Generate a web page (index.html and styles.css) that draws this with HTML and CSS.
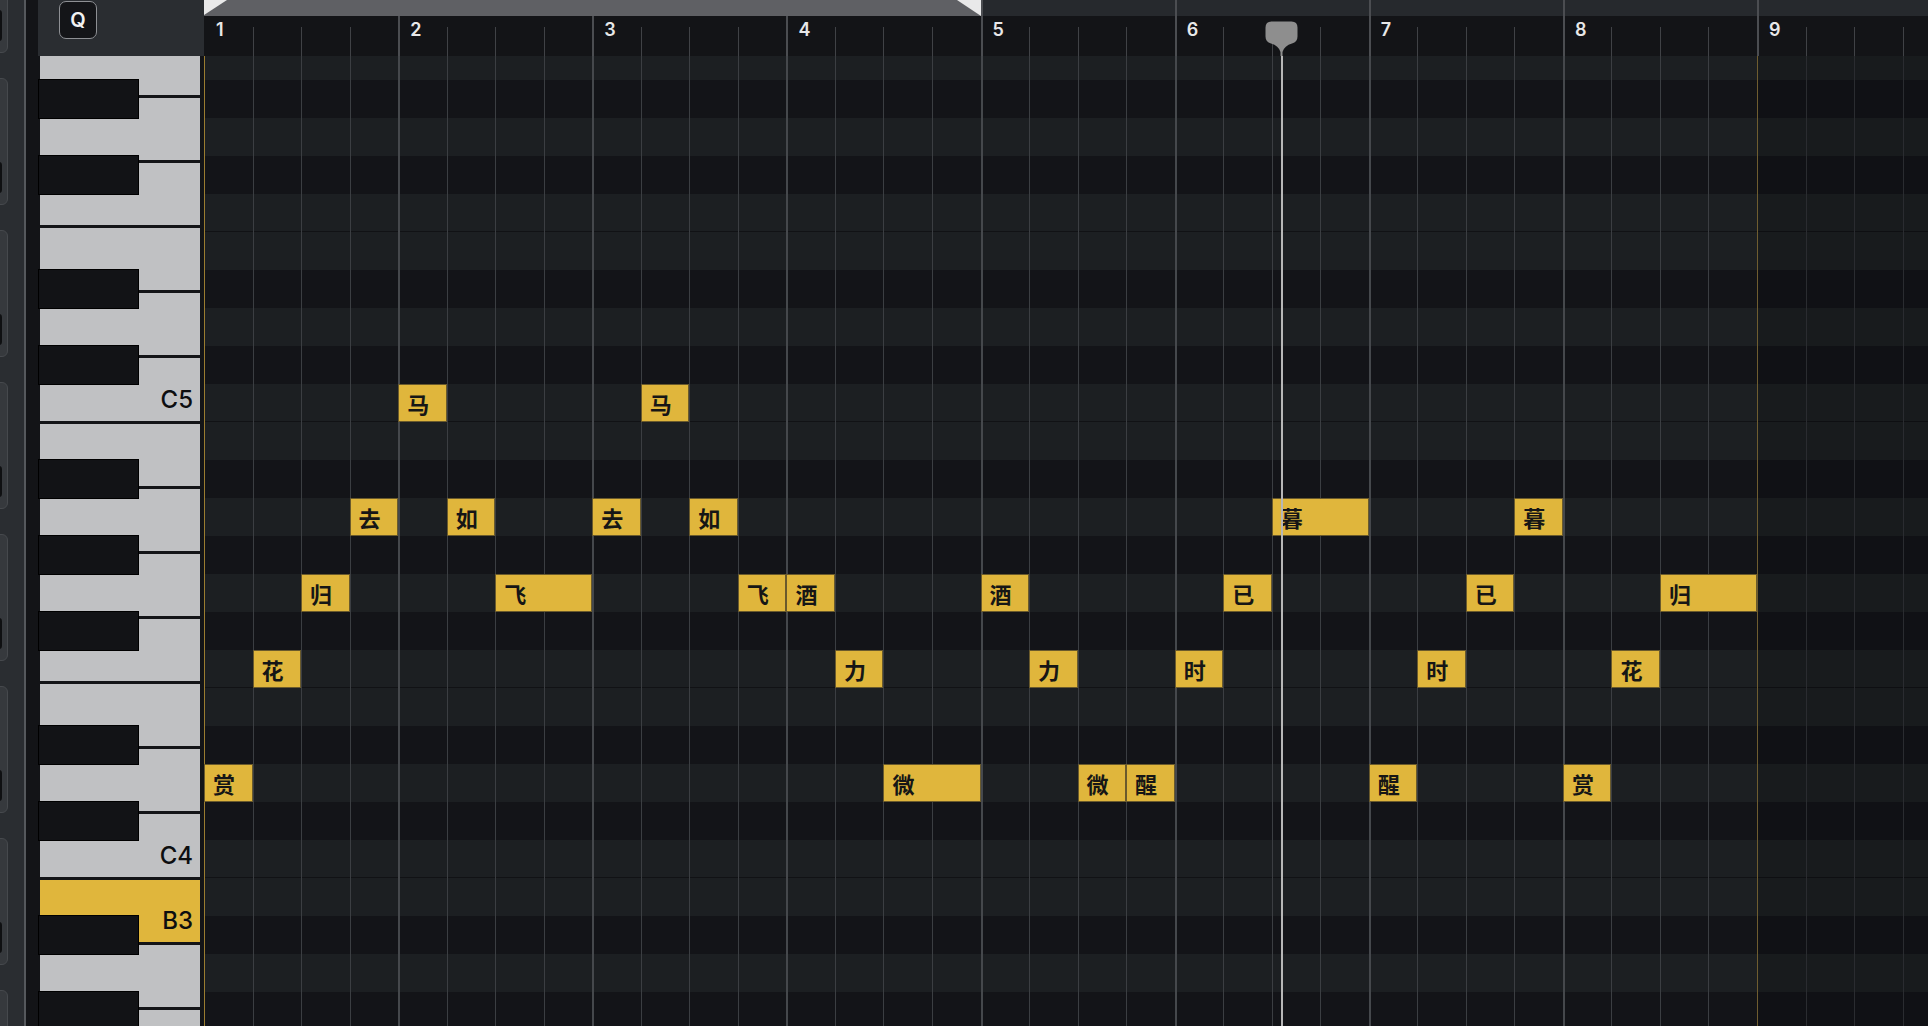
FILE: index.html
```html
<!DOCTYPE html>
<html lang="zh">
<head>
<meta charset="utf-8">
<title>Piano Roll</title>
<link rel="stylesheet" href="styles.css">
</head>
<body>
<div class="app">
  <aside class="sidebar">
    <div class="tab"><span class="tab-knob"></span></div>
    <div class="tab"><span class="tab-knob"></span></div>
    <div class="tab"><span class="tab-knob"></span></div>
    <div class="tab"><span class="tab-knob"></span></div>
    <div class="tab"><span class="tab-knob"></span></div>
    <div class="tab"><span class="tab-knob"></span></div>
    <div class="tab"><span class="tab-knob"></span></div>
    <div class="tab"><span class="tab-knob"></span></div>
  </aside>
  <div class="divider"></div>
  <div class="strip"></div>
  <div class="keys-col">
    <div class="corner"><button class="qbtn">Q</button></div>
    <div class="keyboard">
      <div class="keys">
        <div class="wkey"></div>
        <div class="wkey"></div>
        <div class="wkey"></div>
        <div class="wkey"></div>
        <div class="wkey"></div>
        <div class="wkey">C5</div>
        <div class="wkey"></div>
        <div class="wkey"></div>
        <div class="wkey"></div>
        <div class="wkey"></div>
        <div class="wkey"></div>
        <div class="wkey"></div>
        <div class="wkey">C4</div>
        <div class="wkey active">B3</div>
        <div class="wkey"></div>
        <div class="wkey"></div>
        <div class="bkey" style="--r:1"></div>
        <div class="bkey" style="--r:3"></div>
        <div class="bkey" style="--r:6"></div>
        <div class="bkey" style="--r:8"></div>
        <div class="bkey" style="--r:11"></div>
        <div class="bkey" style="--r:13"></div>
        <div class="bkey" style="--r:15"></div>
        <div class="bkey" style="--r:18"></div>
        <div class="bkey" style="--r:20"></div>
        <div class="bkey" style="--r:23"></div>
        <div class="bkey" style="--r:25"></div>
      </div>
    </div>
  </div>
  <main class="roll">
    <div class="ruler">
      <div class="strip-bg"></div>
      <div class="rbar first" style="grid-column:1 / span 4">1</div>
      <div class="rbar" style="grid-column:5 / span 4">2</div>
      <div class="rbar" style="grid-column:9 / span 4">3</div>
      <div class="rbar" style="grid-column:13 / span 4">4</div>
      <div class="rbar" style="grid-column:17 / span 4">5</div>
      <div class="rbar" style="grid-column:21 / span 4">6</div>
      <div class="rbar" style="grid-column:25 / span 4">7</div>
      <div class="rbar" style="grid-column:29 / span 4">8</div>
      <div class="rbar" style="grid-column:33 / span 4">9</div>
      <div class="tick" style="grid-column:2"></div>
      <div class="tick" style="grid-column:3"></div>
      <div class="tick" style="grid-column:4"></div>
      <div class="tick" style="grid-column:6"></div>
      <div class="tick" style="grid-column:7"></div>
      <div class="tick" style="grid-column:8"></div>
      <div class="tick" style="grid-column:10"></div>
      <div class="tick" style="grid-column:11"></div>
      <div class="tick" style="grid-column:12"></div>
      <div class="tick" style="grid-column:14"></div>
      <div class="tick" style="grid-column:15"></div>
      <div class="tick" style="grid-column:16"></div>
      <div class="tick" style="grid-column:18"></div>
      <div class="tick" style="grid-column:19"></div>
      <div class="tick" style="grid-column:20"></div>
      <div class="tick" style="grid-column:22"></div>
      <div class="tick" style="grid-column:23"></div>
      <div class="tick" style="grid-column:24"></div>
      <div class="tick" style="grid-column:26"></div>
      <div class="tick" style="grid-column:27"></div>
      <div class="tick" style="grid-column:28"></div>
      <div class="tick" style="grid-column:30"></div>
      <div class="tick" style="grid-column:31"></div>
      <div class="tick" style="grid-column:32"></div>
      <div class="tick" style="grid-column:34"></div>
      <div class="tick" style="grid-column:35"></div>
      <div class="tick" style="grid-column:36"></div>
      <div class="locator"></div>
    </div>
    <div class="grid-wrap">
      <div class="grid">
        <div class="row l" style="grid-row:1"></div>
        <div class="row d" style="grid-row:2"></div>
        <div class="row l" style="grid-row:3"></div>
        <div class="row d" style="grid-row:4"></div>
        <div class="row l sep" style="grid-row:5"></div>
        <div class="row l" style="grid-row:6"></div>
        <div class="row d" style="grid-row:7"></div>
        <div class="row l" style="grid-row:8"></div>
        <div class="row d" style="grid-row:9"></div>
        <div class="row l sep" style="grid-row:10"></div>
        <div class="row l" style="grid-row:11"></div>
        <div class="row d" style="grid-row:12"></div>
        <div class="row l" style="grid-row:13"></div>
        <div class="row d" style="grid-row:14"></div>
        <div class="row l" style="grid-row:15"></div>
        <div class="row d" style="grid-row:16"></div>
        <div class="row l sep" style="grid-row:17"></div>
        <div class="row l" style="grid-row:18"></div>
        <div class="row d" style="grid-row:19"></div>
        <div class="row l" style="grid-row:20"></div>
        <div class="row d" style="grid-row:21"></div>
        <div class="row l sep" style="grid-row:22"></div>
        <div class="row l" style="grid-row:23"></div>
        <div class="row d" style="grid-row:24"></div>
        <div class="row l" style="grid-row:25"></div>
        <div class="row d" style="grid-row:26"></div>

        <div class="col bar first" style="grid-column:1"></div>
        <div class="col" style="grid-column:2"></div>
        <div class="col" style="grid-column:3"></div>
        <div class="col" style="grid-column:4"></div>
        <div class="col bar" style="grid-column:5"></div>
        <div class="col" style="grid-column:6"></div>
        <div class="col" style="grid-column:7"></div>
        <div class="col" style="grid-column:8"></div>
        <div class="col bar" style="grid-column:9"></div>
        <div class="col" style="grid-column:10"></div>
        <div class="col" style="grid-column:11"></div>
        <div class="col" style="grid-column:12"></div>
        <div class="col bar" style="grid-column:13"></div>
        <div class="col" style="grid-column:14"></div>
        <div class="col" style="grid-column:15"></div>
        <div class="col" style="grid-column:16"></div>
        <div class="col bar" style="grid-column:17"></div>
        <div class="col" style="grid-column:18"></div>
        <div class="col" style="grid-column:19"></div>
        <div class="col" style="grid-column:20"></div>
        <div class="col bar" style="grid-column:21"></div>
        <div class="col" style="grid-column:22"></div>
        <div class="col" style="grid-column:23"></div>
        <div class="col" style="grid-column:24"></div>
        <div class="col bar" style="grid-column:25"></div>
        <div class="col" style="grid-column:26"></div>
        <div class="col" style="grid-column:27"></div>
        <div class="col" style="grid-column:28"></div>
        <div class="col bar" style="grid-column:29"></div>
        <div class="col" style="grid-column:30"></div>
        <div class="col" style="grid-column:31"></div>
        <div class="col" style="grid-column:32"></div>
        <div class="col after end" style="grid-column:33"></div>
        <div class="col after" style="grid-column:34"></div>
        <div class="col after" style="grid-column:35"></div>
        <div class="col after" style="grid-column:36"></div>

        <div class="note" style="grid-row:20; grid-column:1 / span 1">赏</div>
        <div class="note" style="grid-row:17; grid-column:2 / span 1">花</div>
        <div class="note" style="grid-row:15; grid-column:3 / span 1">归</div>
        <div class="note" style="grid-row:13; grid-column:4 / span 1">去</div>
        <div class="note" style="grid-row:10; grid-column:5 / span 1">马</div>
        <div class="note" style="grid-row:13; grid-column:6 / span 1">如</div>
        <div class="note" style="grid-row:15; grid-column:7 / span 2">飞</div>
        <div class="note" style="grid-row:13; grid-column:9 / span 1">去</div>
        <div class="note" style="grid-row:10; grid-column:10 / span 1">马</div>
        <div class="note" style="grid-row:13; grid-column:11 / span 1">如</div>
        <div class="note" style="grid-row:15; grid-column:12 / span 1">飞</div>
        <div class="note" style="grid-row:15; grid-column:13 / span 1">酒</div>
        <div class="note" style="grid-row:17; grid-column:14 / span 1">力</div>
        <div class="note" style="grid-row:20; grid-column:15 / span 2">微</div>
        <div class="note" style="grid-row:15; grid-column:17 / span 1">酒</div>
        <div class="note" style="grid-row:17; grid-column:18 / span 1">力</div>
        <div class="note" style="grid-row:20; grid-column:19 / span 1">微</div>
        <div class="note" style="grid-row:20; grid-column:20 / span 1">醒</div>
        <div class="note" style="grid-row:17; grid-column:21 / span 1">时</div>
        <div class="note" style="grid-row:15; grid-column:22 / span 1">已</div>
        <div class="note" style="grid-row:13; grid-column:23 / span 2">暮</div>
        <div class="note" style="grid-row:20; grid-column:25 / span 1">醒</div>
        <div class="note" style="grid-row:17; grid-column:26 / span 1">时</div>
        <div class="note" style="grid-row:15; grid-column:27 / span 1">已</div>
        <div class="note" style="grid-row:13; grid-column:28 / span 1">暮</div>
        <div class="note" style="grid-row:20; grid-column:29 / span 1">赏</div>
        <div class="note" style="grid-row:17; grid-column:30 / span 1">花</div>
        <div class="note" style="grid-row:15; grid-column:31 / span 2">归</div>
      </div>
    </div>
    <svg class="ph-handle" viewBox="0 0 33 35" width="33" height="35" aria-hidden="true">
      <path d="M6.5 0.5 H26.5 Q32.5 0.5 32.5 6.5 V15.5 Q32.5 21 27 22.5 Q19.5 24.5 17.5 31 V35 H15.5 V31 Q13.5 24.5 6 22.5 Q0.5 21 0.5 15.5 V6.5 Q0.5 0.5 6.5 0.5 Z" fill="#8e8e8e"/>
    </svg>
    <div class="ph-line"></div>
  </main>
</div>
</body>
</html>
```

FILE: styles.css
```css
* { box-sizing: border-box; }

html, body {
  margin: 0;
  padding: 0;
  width: 1928px;
  height: 1026px;
  overflow: hidden;
  background: #2a2d31;
  font-family: "Inter", "Liberation Sans", "Noto Sans CJK SC", sans-serif;
}

.app {
  display: flex;
  width: 1928px;
  height: 1026px;
  overflow: hidden;
}

/* left tab strip */
.sidebar {
  flex: none;
  width: 24px;
  height: 100%;
  background: #2a2d31;
  display: flex;
  flex-direction: column;
  gap: 25px;
  overflow: hidden;
}
.tab {
  flex: none;
  width: 18px;
  height: 127px;
  margin-left: -10px;
  border: 1px solid #46494d;
  border-radius: 6px;
  background: #36393d;
  display: flex;
  flex-direction: column;
  justify-content: flex-end;
  padding-bottom: 11px;
}
.tab:first-child { margin-top: -74px; }
.tab-knob {
  display: block;
  width: 11px;
  height: 31px;
  border-radius: 0 3px 3px 0;
  background: #0f1012;
}

.divider {
  flex: none;
  width: 2px;
  background: #55585c;
}
.strip {
  flex: none;
  width: 12px;
  background: #131417;
}

/* keyboard column */
.keys-col {
  flex: none;
  width: 166px;
  display: flex;
  flex-direction: column;
}
.corner {
  flex: none;
  height: 56px;
  background: #2a2d31;
  padding: 1px 0 0 21px;
}
.qbtn {
  width: 38px;
  height: 38px;
  padding: 0;
  border: 1px solid #8e9094;
  border-radius: 7px;
  background: #141518;
  color: #f2f2f2;
  font-family: "Inter", "Liberation Sans", sans-serif;
  font-weight: 600;
  font-size: 20px;
  line-height: 1;
}
.keyboard {
  flex: 1;
  overflow: hidden;
  background: #131417;
}
.keys {
  position: relative;
  margin-top: -23.34px;
  padding-left: 2px;
}
.wkey {
  width: 160px;
  height: 65.143px;
  border-bottom: 3px solid #131417;
  background: #c0c1c3;
  display: flex;
  justify-content: flex-end;
  align-items: flex-end;
  padding: 0 7px 9px 0;
  color: #0d0e10;
  font-weight: 500;
  font-size: 24px;
  line-height: 24px;
}
.wkey.active { background: #e0b63c; }
.bkey {
  position: absolute;
  left: 0;
  top: calc(var(--r) * 38px + 8.34px);
  width: 101px;
  height: 39.5px;
  background: #121316;
  border: 1px solid #000;
}

/* roll */
.roll {
  flex: 1;
  min-width: 0;
  position: relative;
  display: flex;
  flex-direction: column;
  background: #131417;
}
.ruler {
  flex: none;
  height: 56px;
  display: grid;
  grid-template-columns: repeat(36, 48.54px);
  grid-template-rows: 16px 40px;
  background: #131417;
}
.strip-bg {
  grid-row: 1;
  grid-column: 1 / -1;
  background: #26292d;
}
.rbar {
  grid-row: 1 / 3;
  border-left: 2px solid #4b4d51;
  padding: 21px 0 0 10px;
  color: #e8e8e8;
  font-weight: 600;
  font-size: 18px;
  line-height: 18px;
}
.rbar.first {
  border-left: 0;
  padding-left: 12px;
}
.tick {
  grid-row: 2;
  margin-top: 11px;
  border-left: 1px solid #404246;
}
.locator {
  grid-row: 1;
  grid-column: 1 / 17;
  background: #5f6064;
  display: flex;
  justify-content: space-between;
  align-items: flex-start;
}
.locator::before {
  content: "";
  width: 0;
  height: 0;
  border-top: 15px solid #e9e9e9;
  border-right: 23px solid transparent;
}
.locator::after {
  content: "";
  width: 0;
  height: 0;
  border-top: 16px solid #e9e9e9;
  border-left: 24px solid transparent;
}

.grid-wrap {
  flex: 1;
  overflow: hidden;
}
.grid {
  display: grid;
  grid-template-columns: repeat(36, 48.54px);
  grid-template-rows: repeat(26, 38px);
  margin-top: -14px;
}
.row { grid-column: 1 / -1; }
.row.l { background: #1c1f22; }
.row.d { background: #131418; }
.row.sep { box-shadow: inset 0 -1px 0 #111215; }

.col {
  grid-row: 1 / -1;
  border-left: 1px solid #3b3e42;
}
.col.bar { border-left: 2px solid #45484c; }
.col.first { border-left: 1px solid #9a7c30; }
.col.after {
  background: rgba(0, 0, 0, 0.12);
  border-left-color: #2a2c30;
}
.col.end { border-left: 1px solid #6f5d30; }

.note {
  border: 1px solid #6a5a2c;
  background: #e0b63c;
  display: flex;
  align-items: center;
  padding-left: 8px;
  overflow: hidden;
  color: #161616;
  font-family: "Noto Sans CJK SC", "Inter", sans-serif;
  font-weight: 700;
  font-size: 22px;
  line-height: 1;
  white-space: nowrap;
}

/* playhead (overlay) */
.ph-handle {
  position: absolute;
  left: 1061px;
  top: 21px;
  display: block;
}
.ph-line {
  position: absolute;
  left: 1077px;
  top: 56px;
  bottom: 0;
  width: 2px;
  background: #b7b7b7;
}
```
